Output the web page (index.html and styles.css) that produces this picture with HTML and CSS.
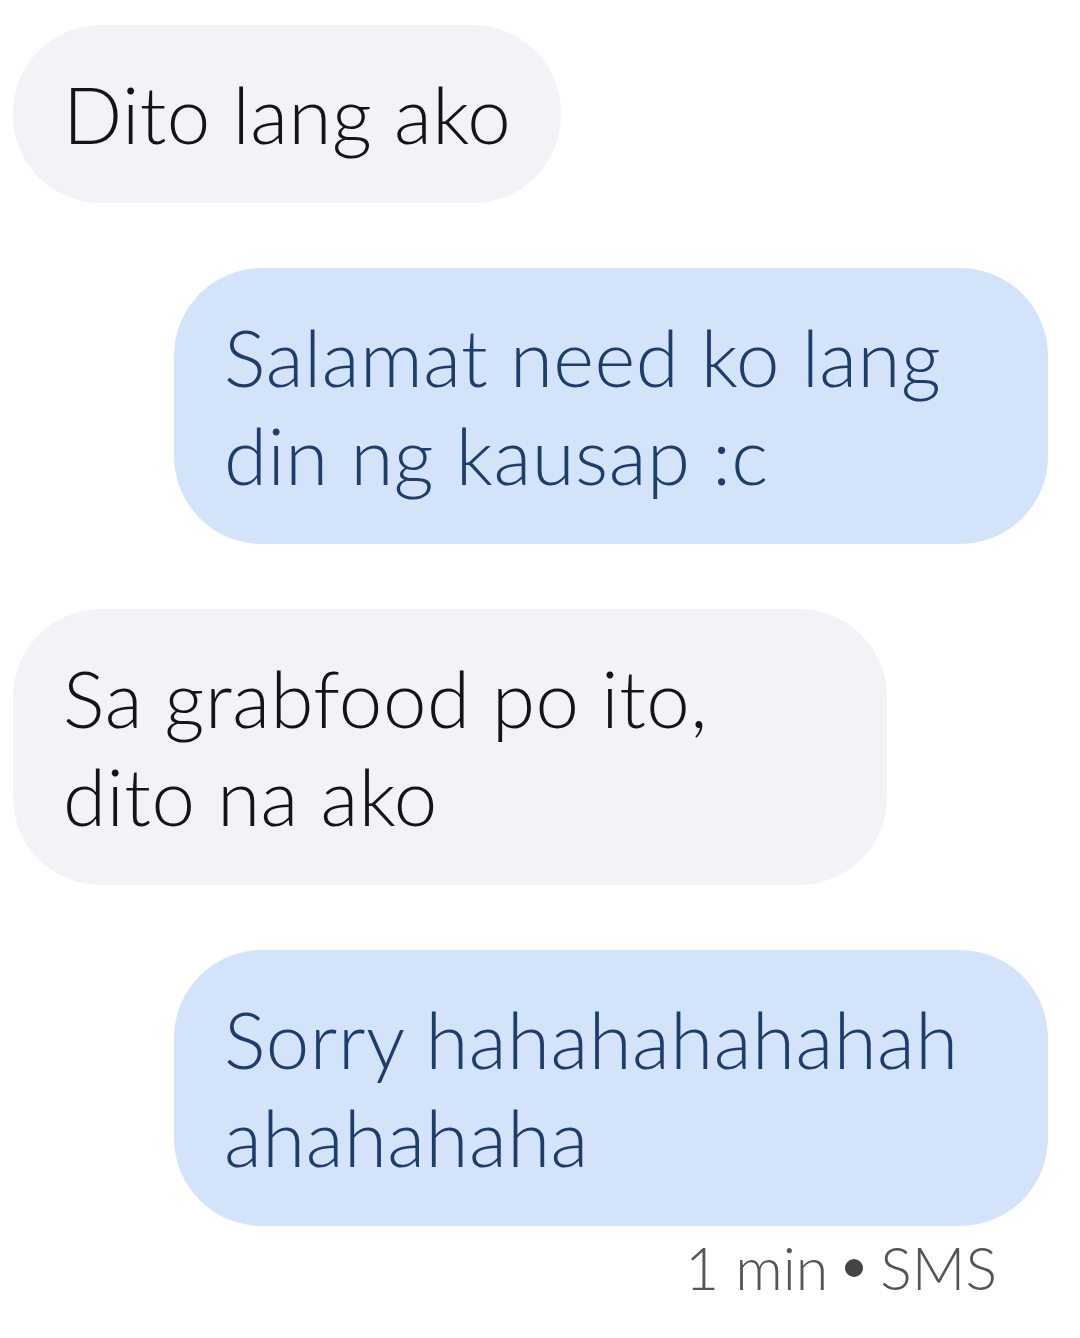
FILE: index.html
```html
<!DOCTYPE html>
<html lang="en">
<head>
    <meta charset="UTF-8">
    <meta name="viewport" content="width=device-width, initial-scale=1.0">
    <title>Messages</title>
    <link rel="stylesheet" href="styles.css">
</head>
<body>
    <div class="thread">
        <div class="msg received">Dito lang ako</div>
        <div class="msg sent long">Salamat need ko lang<br>din ng kausap :c</div>
        <div class="msg received long">Sa grabfood po ito,<br>dito na ako</div>
        <div class="msg sent long">Sorry hahahahahahah<br>ahahahaha</div>
        <div class="meta">1 min <span class="dot"></span> SMS</div>
    </div>
</body>
</html>
```

FILE: styles.css
```css
body {
    margin: 0;
    background: #fff;
    font-family: Lato, "Open Sans", sans-serif;
    font-weight: 300;
}
.thread {
    display: flex;
    flex-direction: column;
    gap: 65px;
    padding: 25px 32px 0 13px;
}
.msg {
    max-width: 774px;
    padding: 40px 50px;
    border-radius: 88px;
    font-size: 78px;
    line-height: 98px;
    letter-spacing: 0.5px;
    white-space: nowrap;
}
.long {
    width: 774px;
}
.received {
    align-self: flex-start;
    background: #f2f2f7;
    color: #141414;
}
.sent {
    align-self: flex-end;
    background: #d3e3fa;
    color: #1f3d6b;
}
.meta {
    align-self: flex-end;
    margin: -59px 51px 0 0;
    font-size: 59px;
    color: #555;
    display: flex;
    align-items: center;
    gap: 17px;
}
.dot {
    width: 18px;
    height: 18px;
    border-radius: 50%;
    background: #444;
}
```
